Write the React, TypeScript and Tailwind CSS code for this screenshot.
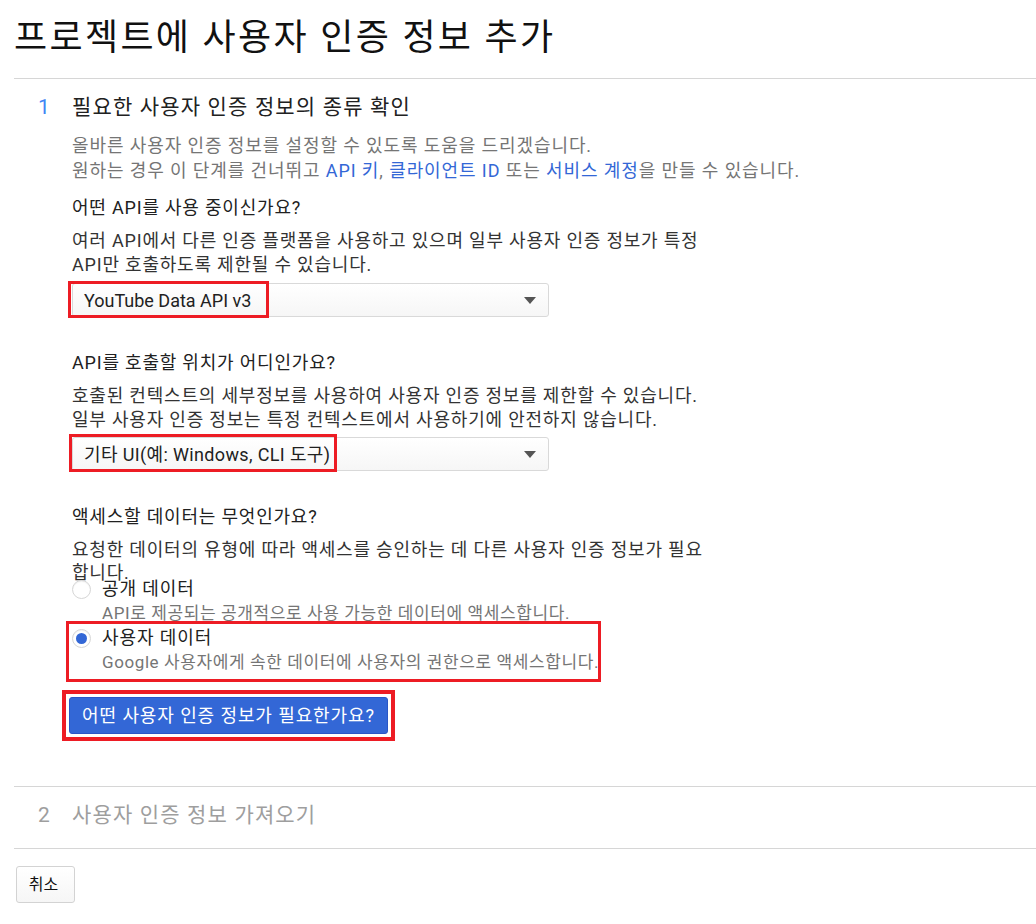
import React from "react";

function Caret() {
  return (
    <svg width="12" height="7" viewBox="0 0 12 7" aria-hidden="true">
      <path d="M0 0h12L6 7z" fill="#555" />
    </svg>
  );
}

function Select({ label, boxClass, textClass }: { label: string; boxClass: string; textClass: string }) {
  return (
    <div className="relative h-[34px] w-[477px]">
      <div className="flex h-full items-center justify-between rounded-[3px] border border-[#d9d9d9] bg-gradient-to-b from-white to-[#f6f6f6] pl-[11px] pr-[12px] text-[18px] text-[#212121]">
        <span className={textClass}>{label}</span>
        <Caret />
      </div>
      <div className={"pointer-events-none absolute border-[3px] border-[#ed1c24] " + boxClass} />
    </div>
  );
}

function Radio({ checked }: { checked?: boolean }) {
  return (
    <span className="flex h-[19px] w-[19px] shrink-0 items-center justify-center rounded-full border border-[#d6d6d6] bg-white shadow-[inset_0_1px_1px_rgba(0,0,0,0.06)]">
      {checked ? <span className="h-[11px] w-[11px] rounded-full bg-[#3367d6]" /> : null}
    </span>
  );
}

export default function App() {
  return (
    <div className="min-h-[924px] bg-white font-['Roboto','Noto_Sans_CJK_KR',sans-serif] text-[#212121]">
      <div className="pl-[14px]">
        <h1 className="pt-[16px] text-[36px] font-normal leading-[44px] tracking-[0.065em] text-[#111]">
          프로젝트에 사용자 인증 정보 추가
        </h1>
        <div className="mt-[18px] border-t border-[#d6d6d6]" />

        <section className="pl-[24px]">
          <div className="mt-[14px] flex items-center text-[21px] leading-[28px]">
            <span className="w-[34px] text-[#4285f4]">1</span>
            <span className="tracking-[0.055em] text-[#212121]">필요한 사용자 인증 정보의 종류 확인</span>
          </div>

          <div className="pl-[34px]">
            <p className="mt-[12px] text-[18px] leading-[25px] tracking-[0.05em] text-[#757575]">
              올바른 사용자 인증 정보를 설정할 수 있도록 도움을 드리겠습니다.
              <br />
              원하는 경우 이 단계를 건너뛰고 <span className="text-[#3367d6]">API 키</span>,{" "}
              <span className="text-[#3367d6]">클라이언트 ID</span> 또는{" "}
              <span className="text-[#3367d6]">서비스 계정</span>을 만들 수 있습니다.
            </p>

            <div className="max-w-[637px] tracking-[0.05em]">
              <h2 className="mt-[13px] text-[18px] font-normal leading-[24px] text-[#212121]">
                어떤 API를 사용 중이신가요?
              </h2>
              <p className="mt-[9px] text-[18px] leading-[24px] text-[#333]">
                여러 API에서 다른 인증 플랫폼을 사용하고 있으며 일부 사용자 인증 정보가 특정 API만 호출하도록
                제한될 수 있습니다.
              </p>
              <div className="mt-[6px] tracking-normal">
                <Select
                  label="YouTube Data API v3"
                  textClass="tracking-normal"
                  boxClass="left-[-4px] top-[-2px] h-[37px] w-[201px]"
                />
              </div>

              <h2 className="mt-[34px] text-[18px] font-normal leading-[24px] text-[#212121]">
                API를 호출할 위치가 어디인가요?
              </h2>
              <p className="mt-[9px] text-[18px] leading-[24px] text-[#333]">
                호출된 컨텍스트의 세부정보를 사용하여 사용자 인증 정보를 제한할 수 있습니다. 일부 사용자 인증
                정보는 특정 컨텍스트에서 사용하기에 안전하지 않습니다.
              </p>
              <div className="mt-[5px] tracking-normal">
                <Select
                  label="기타 UI(예: Windows, CLI 도구)"
                  textClass="tracking-[0.02em]"
                  boxClass="left-[-3px] top-[-3px] h-[38px] w-[268px]"
                />
              </div>

              <h2 className="mt-[34px] text-[18px] font-normal leading-[24px] text-[#212121]">
                액세스할 데이터는 무엇인가요?
              </h2>
              <p className="mt-[9px] text-[18px] leading-[23px] text-[#333]">
                요청한 데이터의 유형에 따라 액세스를 승인하는 데 다른 사용자 인증 정보가 필요합니다.
              </p>
            </div>

            <div className="-mt-[7px]">
              <div className="flex h-[24px] items-center">
                <Radio />
                <span className="ml-[11px] text-[18px] leading-[24px] tracking-[0.05em] text-[#212121]">공개 데이터</span>
              </div>
              <div className="pl-[30px] text-[17px] leading-[24px] tracking-[0.035em] text-[#757575]">
                API로 제공되는 공개적으로 사용 가능한 데이터에 액세스합니다.
              </div>
            </div>

            <div className="relative mt-[1px]">
              <div className="flex h-[24px] items-center">
                <Radio checked />
                <span className="ml-[11px] text-[18px] leading-[24px] tracking-[0.05em] text-[#212121]">사용자 데이터</span>
              </div>
              <div className="pl-[30px] text-[17px] leading-[24px] tracking-[0.035em] text-[#757575]">
                Google 사용자에게 속한 데이터에 사용자의 권한으로 액세스합니다.
              </div>
              <div className="pointer-events-none absolute left-[-6px] top-[-5px] h-[61px] w-[535px] border-[3px] border-[#ed1c24]" />
            </div>

            <div className="ml-[-10px] mt-[16px] inline-block border-[4px] border-[#ed1c24] bg-white p-[3px] align-top">
              <button className="flex h-[37px] w-[319px] items-center justify-center rounded-[3px] border border-[#2a56c6] bg-[#3367d6] text-[18px] tracking-[0.05em] text-white">
                어떤 사용자 인증 정보가 필요한가요?
              </button>
            </div>
          </div>
        </section>

        <div className="mt-[45px] border-t border-[#d6d6d6]" />

        <section className="pl-[24px]">
          <div className="mt-[14px] flex items-center text-[21px] leading-[28px] text-[#9e9e9e]">
            <span className="w-[34px]">2</span>
            <span className="tracking-[0.055em]">사용자 인증 정보 가져오기</span>
          </div>
        </section>

        <div className="mt-[19px] border-t border-[#d6d6d6]" />

        <button className="ml-[2px] mt-[17px] flex h-[37px] w-[59px] items-center justify-center rounded-[3px] border border-[#d3d3d3] bg-gradient-to-b from-white to-[#f6f6f6] pr-[4px] text-[16px] text-[#111]">
          취소
        </button>
      </div>
    </div>
  );
}
